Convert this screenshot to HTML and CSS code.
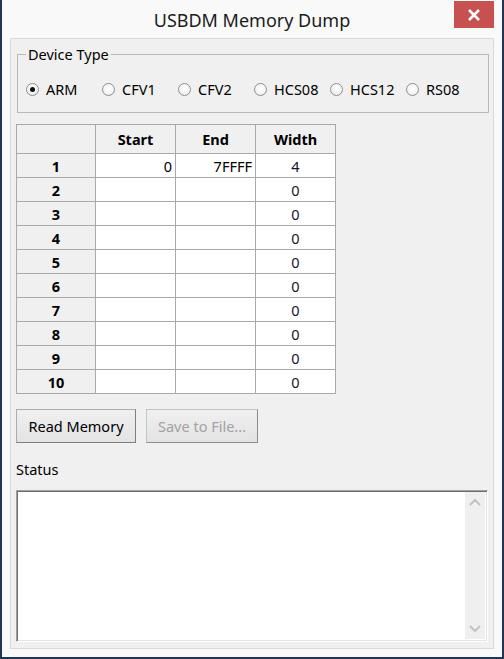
FILE: index.html
```html
<!DOCTYPE html>
<html>
<head>
<meta charset="utf-8">
<link rel="stylesheet" href="styles.css">
</head>
<body>
<div class="window">
  <div class="titlebar">
    <div class="title">USBDM Memory Dump</div>
    <div class="close">
      <svg width="14" height="12" viewBox="0 0 14 12"><path d="M2 1 L12 11 M12 1 L2 11" stroke="#fff" stroke-width="2.6" fill="none"/></svg>
    </div>
  </div>
  <div class="client">
    <fieldset class="group">
      <legend>Device Type</legend>
      <div class="radios">
        <label class="radio"><span class="dot checked"></span>ARM</label>
        <label class="radio"><span class="dot"></span>CFV1</label>
        <label class="radio"><span class="dot"></span>CFV2</label>
        <label class="radio"><span class="dot"></span>HCS08</label>
        <label class="radio"><span class="dot"></span>HCS12</label>
        <label class="radio"><span class="dot"></span>RS08</label>
      </div>
    </fieldset>

    <table class="grid">
      <colgroup><col class="c0"><col class="c1"><col class="c1"><col class="c1"></colgroup>
      <thead>
        <tr><th></th><th>Start</th><th>End</th><th>Width</th></tr>
      </thead>
      <tbody>
        <tr><th>1</th><td class="num">0</td><td class="num">7FFFF</td><td class="w">4</td></tr>
        <tr><th>2</th><td></td><td></td><td class="w">0</td></tr>
        <tr><th>3</th><td></td><td></td><td class="w">0</td></tr>
        <tr><th>4</th><td></td><td></td><td class="w">0</td></tr>
        <tr><th>5</th><td></td><td></td><td class="w">0</td></tr>
        <tr><th>6</th><td></td><td></td><td class="w">0</td></tr>
        <tr><th>7</th><td></td><td></td><td class="w">0</td></tr>
        <tr><th>8</th><td></td><td></td><td class="w">0</td></tr>
        <tr><th>9</th><td></td><td></td><td class="w">0</td></tr>
        <tr><th>10</th><td></td><td></td><td class="w">0</td></tr>
      </tbody>
    </table>

    <div class="buttons">
      <button class="btn read">Read Memory</button>
      <button class="btn save" disabled>Save to File...</button>
    </div>

    <div class="status-label">Status</div>
    <div class="status-box">
      <div class="status-text"></div>
      <div class="scrollbar">
        <svg width="12" height="8" viewBox="0 0 12 8"><path d="M1 7 L6 2 L11 7" stroke="#c2c2c2" stroke-width="2" fill="none"/></svg>
        <svg width="12" height="8" viewBox="0 0 12 8"><path d="M1 1 L6 6 L11 1" stroke="#c2c2c2" stroke-width="2" fill="none"/></svg>
      </div>
    </div>
  </div>
</div>
</body>
</html>
```

FILE: styles.css
```css
* { box-sizing: border-box; }
html, body { margin: 0; padding: 0; }
body {
  background: #24365a;
  font-family: "Noto Sans", "Open Sans", "DejaVu Sans", sans-serif;
  font-size: 14.5px;
  color: #000;
}
.window {
  width: 504px;
  height: 659px;
  background: #f9f9f9;
  border-left: 2px solid #233557;
  border-right: 2px solid #233557;
  border-bottom: 2px solid #233557;
  display: flex;
  flex-direction: column;
}
.titlebar {
  position: relative;
  height: 38px;
  flex: none;
}
.title {
  text-align: center;
  font-size: 18px;
  line-height: 22px;
  padding-top: 9px;
  color: #1b1b1b;
}
.close {
  position: absolute;
  top: 1px;
  right: 8px;
  width: 40px;
  height: 27px;
  background: #c75050;
  display: flex;
  align-items: center;
  justify-content: center;
}
.client {
  margin: 0 8px;
  height: 611px;
  background: #f0f0f0;
  border: 1px solid #d9d9d9;
  padding: 0 5px;
  display: flex;
  flex-direction: column;
  align-items: flex-start;
}
.group {
  margin: 5px 0 0 1px;
  width: 472px;
  height: 69px;
  border: 1px solid #b9b9b9;
  padding: 0 0 0 8px;
}
.group legend {
  padding: 0 2px;
  margin-left: 0;
  line-height: 20px;
}
.radios {
  display: grid;
  grid-template-columns: repeat(6, 76px);
  margin-top: 15px;
}
.radio {
  display: flex;
  align-items: center;
  height: 20px;
  white-space: nowrap;
}
.dot {
  width: 13px;
  height: 13px;
  border-radius: 50%;
  border: 1px solid #8f8f8f;
  background: radial-gradient(circle at 50% 40%, #ffffff 0%, #f4f4f4 55%, #dedede 100%);
  margin-right: 7px;
  flex: none;
  display: flex;
  align-items: center;
  justify-content: center;
}
.dot.checked::after {
  content: "";
  width: 5px;
  height: 5px;
  border-radius: 50%;
  background: #111;
}
.grid {
  margin-top: 11px;
  border-collapse: collapse;
  table-layout: fixed;
  width: 319px;
}
.grid col.c0 { width: 79px; }
.grid col.c1 { width: 80px; }
.grid th, .grid td {
  border: 1px solid #a9a9a9;
  padding: 0 4px;
  height: 24px;
}
.grid th {
  background: #f0f0f0;
  font-weight: bold;
  text-align: center;
}
.grid thead th { height: 29px; }
.grid td { background: #fff; }
.grid td.num { text-align: right; padding-right: 3px; }
.grid td.w { text-align: center; color: #1a0f2a; }
.buttons {
  margin-top: 15px;
  display: flex;
  gap: 10px;
}
.btn {
  height: 34px;
  font-family: inherit;
  font-size: 14.5px;
  background: linear-gradient(#f0f0f0, #e3e3e3);
  border: 1px solid #acacac;
  border-right-color: #7f7f7f;
  border-bottom-color: #7f7f7f;
  padding: 0;
  color: #000;
}
.btn.read { width: 120px; }
.btn.save { width: 112px; color: #a2a2a2; border-color: #c4c4c4; border-right-color: #8c8c8c; border-bottom-color: #8c8c8c; }
.status-label {
  margin-top: 16px;
  line-height: 20px;
}
.status-box {
  margin-top: 11px;
  width: 472px;
  height: 152px;
  background: #fff;
  border-top: 1px solid #a0a0a0;
  border-left: 1px solid #a0a0a0;
  border-right: 1px solid #ffffff;
  border-bottom: 1px solid #ffffff;
  box-shadow: inset 1px 1px 0 #6e6e6e, inset -1px -1px 0 #e3e3e3;
  display: flex;
  padding: 1px 2px 2px 1px;
}
.status-text { flex: 1; }
.scrollbar {
  width: 20px;
  background: #efefef;
  display: flex;
  flex-direction: column;
  justify-content: space-between;
  align-items: center;
  padding: 6px 0 6px;
}
```
